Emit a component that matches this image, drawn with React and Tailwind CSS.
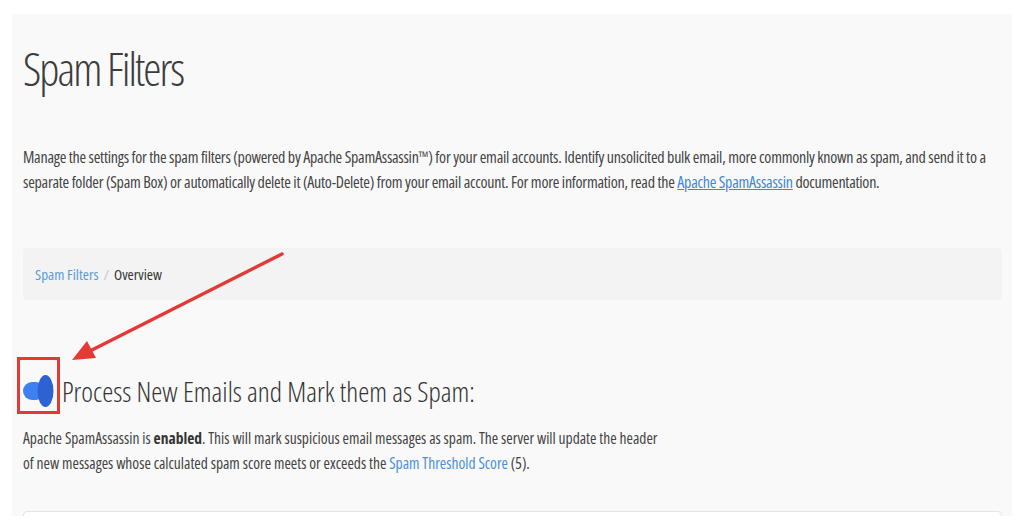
export default function App() {
  return (
    <div className="relative min-h-screen bg-white pt-[14px] px-[12px] font-['Open_Sans',sans-serif] font-stretch-condensed text-[#444]">
      <div className="bg-[#f9f9f9] pl-[11px] pr-[10px] pt-[28px] h-[502px] overflow-hidden">
        <h1 className="text-[46px] leading-[52px] font-light tracking-[-2px] text-[#3d3d3d]">Spam Filters</h1>

        <p className="mt-[51px] text-[16px] leading-[25px] tracking-[-0.25px]">
          Manage the settings for the spam filters (powered by Apache SpamAssassin™) for your email accounts. Identify unsolicited bulk email, more commonly known as spam, and send it to a separate folder (Spam Box) or automatically delete it (Auto-Delete) from your email account. For more information, read the{" "}
          <a href="#" className="text-[#3f87d6] underline">Apache SpamAssassin</a> documentation.
        </p>

        <nav className="mt-[53px] bg-[#f3f3f3] rounded px-[12px] py-[15px] text-[15px] leading-[22px]">
          <a href="#" className="text-[#5b9bd9]">Spam Filters</a>
          <span className="mx-[5px] text-[#c8c8c8]">/</span>
          <span className="text-[#333]">Overview</span>
        </nav>

        <div className="mt-[74px] flex items-center gap-[8px]">
          <svg width="31" height="32" viewBox="0 0 31 32" className="shrink-0">
            <rect x="0" y="7" width="22" height="18" rx="9" fill="#3d80f2" />
            <ellipse cx="22.5" cy="16" rx="8" ry="16" fill="#2d62d2" />
          </svg>
          <h2 className="text-[28px] leading-[34px] font-light text-[#333]">Process New Emails and Mark them as Spam:</h2>
        </div>

        <p className="mt-[18px] text-[15.5px] leading-[25px]">
          Apache SpamAssassin is <b className="font-bold text-[#333]">enabled</b>. This will mark suspicious email messages as spam. The server will update the header
          <br />
          of new messages whose calculated spam score meets or exceeds the{" "}
          <a href="#" className="text-[#4a90d9]">Spam Threshold Score</a> (5).
        </p>

        <div className="mt-[35px] h-[20px] bg-white border border-[#e4e4e4] rounded-t" />
      </div>

      {/* annotation */}
      <div className="absolute left-[17px] top-[357px] w-[43px] h-[57px] border-[3px] border-[#e53935]" />
      <svg className="absolute inset-0 pointer-events-none" width="1024" height="526" viewBox="0 0 1024 526">
        <line x1="282" y1="254" x2="88" y2="352" stroke="#e53935" strokeWidth="3.5" strokeLinecap="round" />
        <polygon points="72,360 96,358 87,341" fill="#e53935" />
      </svg>
    </div>
  );
}
